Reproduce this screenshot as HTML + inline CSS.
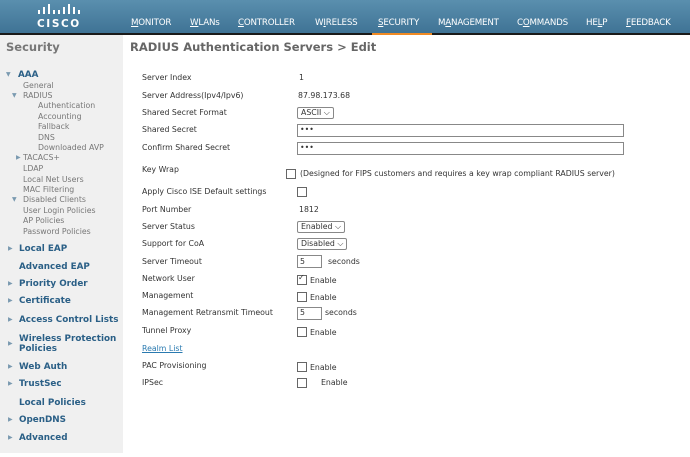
<html><head><style>
body{margin:0;width:690px;height:457px;background:#fff;position:relative;overflow:hidden;font-family:"DejaVu Sans","Liberation Sans",sans-serif}
.h{position:absolute;left:0;top:0;width:690px;height:33px;background:linear-gradient(#5a8fae,#3f7395);border-bottom:2px solid #1a1a1a}
.n{position:absolute;top:18px;color:#fff;font-size:8.7px;letter-spacing:-0.2px}
.sb{position:absolute;left:0;top:35px;width:123px;height:418px;background:#f0f0f0}
.t{position:absolute;white-space:nowrap;line-height:10px}
.s{font-size:7.8px;color:#777}
.b{font-size:8.8px;font-weight:bold;color:#2a5f86}
.l{font-size:7.8px;color:#333;left:142px}
.v{font-size:7.8px;color:#333}
.box{position:absolute;border:1px solid #888;background:#fff;height:11px}
.cb{position:absolute;width:8px;height:8px;border:1px solid #666;background:#fff}
.sel{position:absolute;border:1px solid #888;border-radius:2px;height:10px;font-size:7.8px;color:#333;padding:0 3px;line-height:10px;background:#fff}
.tri{position:absolute;font-size:6px;color:#7a9ab0}
</style></head><body>
<div class="h"></div>
<svg style="position:absolute;left:38px;top:4px" width="46" height="13" fill="#fff">
<rect x="0" y="6" width="2" height="4"/><rect x="5" y="3" width="2" height="7"/><rect x="10" y="0" width="2" height="10"/><rect x="15" y="6" width="2" height="4"/><rect x="20" y="6" width="2" height="4"/><rect x="25" y="3" width="2" height="7"/><rect x="30" y="0" width="2" height="10"/><rect x="35" y="3" width="2" height="7"/><rect x="40" y="6" width="2" height="4"/>
</svg>
<div class="t" style="left:37px;top:19px;color:#fff;font-size:10.5px;font-weight:bold;letter-spacing:1.6px">CISCO</div>
<div class="n" style="left:131px"><u>M</u>ONITOR</div>
<div class="n" style="left:190px"><u>W</u>LANs</div>
<div class="n" style="left:238px"><u>C</u>ONTROLLER</div>
<div class="n" style="left:315px">W<u>I</u>RELESS</div>
<div class="n" style="left:378px"><u>S</u>ECURITY</div>
<div class="n" style="left:438px">M<u>A</u>NAGEMENT</div>
<div class="n" style="left:517px">C<u>O</u>MMANDS</div>
<div class="n" style="left:586px">HE<u>L</u>P</div>
<div class="n" style="left:626px"><u>F</u>EEDBACK</div>
<div style="position:absolute;left:372px;top:33px;width:60px;height:2px;background:#f08a24"></div>
<div class="sb"></div>
<div class="t" style="left:6px;top:42px;font-size:11.5px;font-weight:bold;color:#777">Security</div>
<div class="t" style="left:130px;top:42px;font-size:11.5px;font-weight:bold;color:#666">RADIUS Authentication Servers &gt; Edit</div>
<div class="tri" style="left:6px;top:71px">▼</div><div class="t b" style="left:18px;top:70px">AAA</div>
<div class="t s" style="left:23px;top:81px">General</div>
<div class="tri" style="left:12px;top:92px">▼</div><div class="t s" style="left:23px;top:91px">RADIUS</div>
<div class="t s" style="left:38px;top:101px">Authentication</div>
<div class="t s" style="left:38px;top:112px">Accounting</div>
<div class="t s" style="left:38px;top:122px">Fallback</div>
<div class="t s" style="left:38px;top:133px">DNS</div>
<div class="t s" style="left:38px;top:143px">Downloaded AVP</div>
<div class="tri" style="left:16px;top:154px">▶</div><div class="t s" style="left:23px;top:153px">TACACS+</div>
<div class="t s" style="left:23px;top:164px">LDAP</div>
<div class="t s" style="left:23px;top:175px">Local Net Users</div>
<div class="t s" style="left:23px;top:185px">MAC Filtering</div>
<div class="tri" style="left:12px;top:196px">▼</div><div class="t s" style="left:23px;top:195px">Disabled Clients</div>
<div class="t s" style="left:23px;top:206px">User Login Policies</div>
<div class="t s" style="left:23px;top:216px">AP Policies</div>
<div class="t s" style="left:23px;top:227px">Password Policies</div>
<div class="tri" style="left:8px;top:245px">▶</div><div class="t b" style="left:19px;top:244px">Local EAP</div>
<div class="t b" style="left:19px;top:262px">Advanced EAP</div>
<div class="tri" style="left:8px;top:280px">▶</div><div class="t b" style="left:19px;top:279px">Priority Order</div>
<div class="tri" style="left:8px;top:297px">▶</div><div class="t b" style="left:19px;top:296px">Certificate</div>
<div class="tri" style="left:8px;top:316px">▶</div><div class="t b" style="left:19px;top:315px">Access Control Lists</div>
<div class="tri" style="left:8px;top:340px">▶</div><div class="t b" style="left:19px;top:334px">Wireless Protection</div><div class="t b" style="left:19px;top:344px">Policies</div>
<div class="tri" style="left:8px;top:363px">▶</div><div class="t b" style="left:19px;top:362px">Web Auth</div>
<div class="tri" style="left:8px;top:380px">▶</div><div class="t b" style="left:19px;top:379px">TrustSec</div>
<div class="t b" style="left:19px;top:398px">Local Policies</div>
<div class="tri" style="left:8px;top:416px">▶</div><div class="t b" style="left:19px;top:415px">OpenDNS</div>
<div class="tri" style="left:8px;top:434px">▶</div><div class="t b" style="left:19px;top:433px">Advanced</div>

<div class="t l" style="top:73px">Server Index</div><div class="t v" style="left:299px;top:73px">1</div>
<div class="t l" style="top:91px">Server Address(Ipv4/Ipv6)</div><div class="t v" style="left:298px;top:91px">87.98.173.68</div>
<div class="t l" style="top:108px">Shared Secret Format</div><div class="sel" style="left:297px;top:107px">ASCII ⌵</div>
<div class="t l" style="top:125px">Shared Secret</div><div class="box" style="left:297px;top:124px;width:325px"></div><div class="t v" style="left:300px;top:125px">•••</div>
<div class="t l" style="top:143px">Confirm Shared Secret</div><div class="box" style="left:297px;top:142px;width:325px"></div><div class="t v" style="left:300px;top:143px">•••</div>
<div class="t l" style="top:165px">Key Wrap</div><div class="cb" style="left:286px;top:169px"></div><div class="t v" style="left:300px;top:169px">(Designed for FIPS customers and requires a key wrap compliant RADIUS server)</div>
<div class="t l" style="top:187px">Apply Cisco ISE Default settings</div><div class="cb" style="left:297px;top:187px"></div>
<div class="t l" style="top:205px">Port Number</div><div class="t v" style="left:299px;top:205px">1812</div>
<div class="t l" style="top:222px">Server Status</div><div class="sel" style="left:297px;top:221px">Enabled ⌵</div>
<div class="t l" style="top:239px">Support for CoA</div><div class="sel" style="left:297px;top:238px">Disabled ⌵</div>
<div class="t l" style="top:257px">Server Timeout</div><div class="box" style="left:297px;top:255px;width:23px"></div><div class="t v" style="left:300px;top:257px">5</div><div class="t v" style="left:328px;top:257px">seconds</div>
<div class="t l" style="top:274px">Network User</div><div class="cb" style="left:297px;top:275px"></div><div class="t v" style="left:298px;top:273px;font-size:8px">✓</div><div class="t v" style="left:310px;top:276px">Enable</div>
<div class="t l" style="top:291px">Management</div><div class="cb" style="left:297px;top:292px"></div><div class="t v" style="left:310px;top:293px">Enable</div>
<div class="t l" style="top:308px">Management Retransmit Timeout</div><div class="box" style="left:297px;top:307px;width:23px"></div><div class="t v" style="left:300px;top:308px">5</div><div class="t v" style="left:325px;top:308px">seconds</div>
<div class="t l" style="top:326px">Tunnel Proxy</div><div class="cb" style="left:297px;top:327px"></div><div class="t v" style="left:310px;top:328px">Enable</div>
<div class="t l" style="top:344px;color:#2a7ab0;text-decoration:underline">Realm List</div>
<div class="t l" style="top:361px">PAC Provisioning</div><div class="cb" style="left:297px;top:362px"></div><div class="t v" style="left:310px;top:363px">Enable</div>
<div class="t l" style="top:378px">IPSec</div><div class="cb" style="left:297px;top:378px"></div><div class="t v" style="left:321px;top:378px">Enable</div>
</body></html>
